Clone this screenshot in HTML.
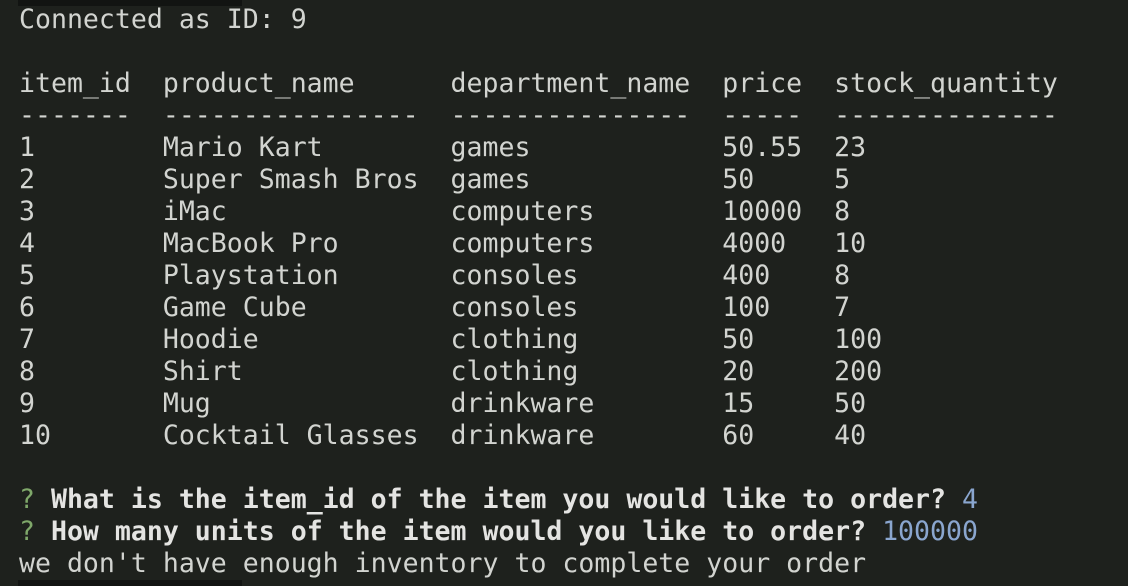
<!DOCTYPE html>
<html><head><style>
html,body{margin:0;padding:0;background:#1e211d;width:1128px;height:586px;overflow:hidden}
pre{margin:0;position:absolute;left:19px;top:4px;font-family:"DejaVu Sans Mono","Liberation Mono",monospace;font-size:26.55px;line-height:32px;color:#d2d4d0;letter-spacing:0}
.g{color:#7fa86a}.b{font-weight:bold;color:#e4e4e2}.a{color:#8aa6cf}
.bar{position:absolute;background:#121412}
</style></head><body>
<div class="bar" style="left:18px;top:0;width:224px;height:6px"></div>
<div class="bar" style="left:18px;top:580px;width:224px;height:6px"></div>
<pre>Connected as ID: 9

item_id  product_name      department_name  price  stock_quantity
-------  ----------------  ---------------  -----  --------------
1        Mario Kart        games            50.55  23
2        Super Smash Bros  games            50     5
3        iMac              computers        10000  8
4        MacBook Pro       computers        4000   10
5        Playstation       consoles         400    8
6        Game Cube         consoles         100    7
7        Hoodie            clothing         50     100
8        Shirt             clothing         20     200
9        Mug               drinkware        15     50
10       Cocktail Glasses  drinkware        60     40

<span class="g">?</span> <span class="b">What is the item_id of the item you would like to order?</span> <span class="a">4</span>
<span class="g">?</span> <span class="b">How many units of the item would you like to order?</span> <span class="a">100000</span>
we don't have enough inventory to complete your order</pre>
</body></html>
